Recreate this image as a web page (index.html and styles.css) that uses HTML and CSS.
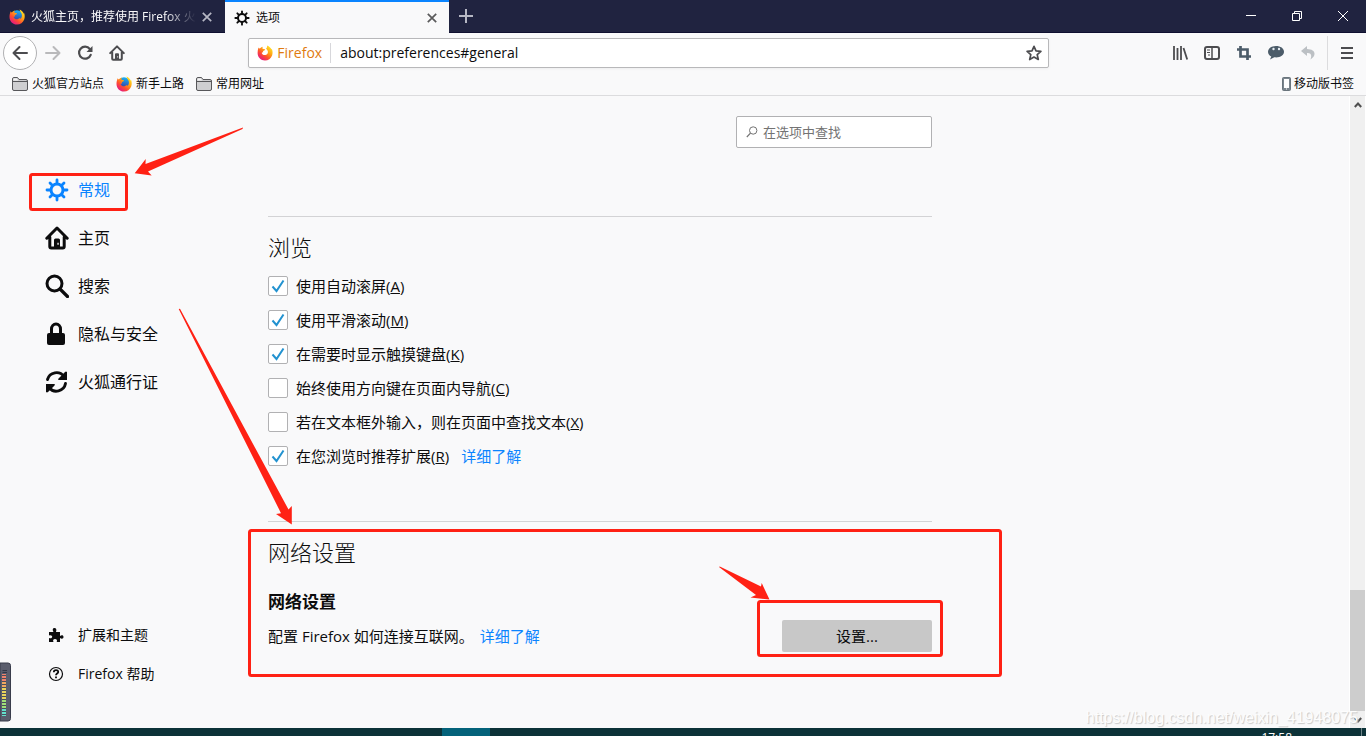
FILE: index.html
```html
<!DOCTYPE html>
<html lang="zh-CN">
<head>
<meta charset="utf-8">
<title>选项</title>
<link rel="stylesheet" href="styles.css">
</head>
<body>
<svg class="defs" aria-hidden="true">
  <defs>
    <linearGradient id="flame" x1="0.85" y1="0.1" x2="0.2" y2="0.95">
      <stop offset="0" stop-color="#ffe226"/><stop offset="0.35" stop-color="#ffa413"/><stop offset="0.65" stop-color="#ff4f2e"/><stop offset="1" stop-color="#e31587"/>
    </linearGradient>
    <linearGradient id="globe" x1="0.6" y1="0" x2="0.4" y2="1">
      <stop offset="0" stop-color="#19b5f5"/><stop offset="1" stop-color="#3c2a96"/>
    </linearGradient>
    <symbol id="firefox" viewBox="0 0 16 16">
      <circle cx="8" cy="7.2" r="6" fill="url(#globe)"/>
      <path fill="url(#flame)" d="M1.6 2.2c.3.7.8 1.1 1.300 1.300C3.700 2.400 4.900 1.700 6 1.500 5.400 2.200 5.200 3 5.300 3.600c.7.6 1.600.4 2.700.8-.1.900-1.300 1-1.900 1.700-.4.6 0 1.400 0 1.400-.7-.2-1.300.1-1.500.5.8 2 2.400 2.500 3.800 2.200 1.200-.3 2.100-1.100 2.800-.9.5.1.3.6-.1 1 1.800-1.200 2.300-3.500 1.500-5.500C12.200 3.400 10.900 2.600 10.600.4c1.800.9 3.700 2.500 4.100 4.300.2-.3.3-.8.2-1.300 1 2.200 1.100 4.800.3 7-1.100 3.100-3.900 5.200-7.200 5.200C3.800 15.600.5 12.300.5 8c0-2.200.5-3.900 1.100-5.800z"/>
    </symbol>
    <symbol id="firefox-flat" viewBox="0 0 16 16">
      <path fill="url(#flame)" d="M1.500 2.500c.3.700.8 1 1.300 1.100C3.700 2.500 4.800 1.900 6 1.700c-.6.7-.7 1.300-.6 1.900.7.600 1.600.4 2.700.8-.1.900-1.300 1-1.900 1.700-.4.600.1 1.300.1 1.300-.8-.1-1.400.1-1.600.5.8 2 2.500 2.400 3.700 2.100 2.700-.7 3-3.100 2-4.800-.4-.7-1-1.200-1.600-1.500 1.500-.6 1-2.300 1.600-3.300 1.500.8 3.500 2.300 4.100 4.100.2-.3.300-.7.200-1.100 1 2.200 1.200 4.800.4 7-1.100 3.100-3.900 5.100-7.100 5.100-4.200 0-7.400-3.400-7.400-7.500 0-2 .3-3.700.9-5.500z"/>
    </symbol>
    <symbol id="gear" viewBox="0 0 24 24">
      <g fill="none" stroke="currentColor" stroke-linecap="round">
        <circle cx="12" cy="12" r="6" stroke-width="3"/>
        <path stroke-width="2.800" d="M12 5V2M12 22v-3M5 12H2M22 12h-3M7 7 5 5M19 19l-2-2M7 17l-2 2M19 5l-2 2"/>
      </g>
    </symbol>
    <symbol id="home" viewBox="0 0 24 24">
      <path fill="none" stroke="currentColor" stroke-width="3" stroke-linecap="round" stroke-linejoin="round" d="M1.800 12.200 12 2l10.200 10.200M4.800 11v9.500q0 1.500 1.500 1.500h11.400q1.500 0 1.500-1.500V11"/>
      <path fill="currentColor" fill-rule="evenodd" d="M9 22v-8q0-1.500 1.500-1.500h3q1.500 0 1.500 1.500v8zm3.400-5.200v1.900h1.300v-1.900z"/>
    </symbol>
    <symbol id="folder" viewBox="0 0 16 14">
      <path d="M.5 12V2Q.5.500 2 .5h3.500L7 2.500h7Q15.500 2.500 15.500 4v8q0 1.500-1.500 1.500H2Q.5 13.500.5 12z" fill="#cfcfd1" stroke="#57575a"/>
      <path d="M.5 4.500h15" stroke="#57575a"/><path d="M1.500 3.500v-2H5l1 2z" fill="#f5f5f5"/>
    </symbol>
    <symbol id="cross" viewBox="0 0 10 10"><path d="m.8.8 8.400 8.400m0-8.400L.8 9.200" fill="none" stroke="currentColor" stroke-width="1.700"/></symbol>
    <symbol id="check" viewBox="0 0 18 18"><path d="m3.500 9.500 4 4.500L14.500 3.500" fill="none" stroke="#2292d0" stroke-width="2"/></symbol>
  </defs>
</svg>

<header>
  <div class="tabs">
    <div class="tab">
      <svg class="i16"><use href="#firefox"/></svg>
      <span class="tab-title fade">火狐主页，推荐使用 Firefox 火</span>
      <button class="tab-close" aria-label="关闭标签页"><svg class="i10"><use href="#cross"/></svg></button>
    </div>
    <div class="tab active">
      <svg class="i16"><use href="#gear"/></svg>
      <span class="tab-title">选项</span>
      <button class="tab-close" aria-label="关闭标签页"><svg class="i10"><use href="#cross"/></svg></button>
    </div>
    <button class="tab-new" aria-label="新标签页"><svg class="i14" viewBox="0 0 14 14"><path d="M7 0v14M0 7h14" stroke="currentColor" stroke-width="2"/></svg></button>
    <div class="window-buttons">
      <button aria-label="最小化"><svg class="i10" viewBox="0 0 10 10"><path d="M0 4.500h10" stroke="#fff"/></svg></button>
      <button aria-label="还原"><svg class="i10" viewBox="0 0 10 10"><path d="M.5 2.500h7v7h-7zM2.500 2V.5h7v7H8" fill="none" stroke="#fff"/></svg></button>
      <button aria-label="关闭"><svg class="i10" viewBox="0 0 10 10"><path d="m0 0 10 10M10 0 0 10" stroke="#fff"/></svg></button>
    </div>
  </div>

  <div class="toolbar">
    <button class="tool back" aria-label="后退"><svg class="i16" viewBox="0 0 16 16"><path d="M15 8H1.500M7.500 2l-6 6 6 6" fill="none" stroke="currentColor" stroke-width="2" stroke-linecap="round" stroke-linejoin="round"/></svg></button>
    <button class="tool forward" aria-label="前进"><svg class="i16" viewBox="0 0 16 16"><path d="M1 8h13.500M8.500 2l6 6-6 6" fill="none" stroke="currentColor" stroke-width="2" stroke-linecap="round" stroke-linejoin="round"/></svg></button>
    <button class="tool" aria-label="刷新"><svg class="i16" viewBox="0 0 16 16"><path d="M12.800 4A6 6 0 1 0 13.700 9.800" fill="none" stroke="currentColor" stroke-width="2.200" stroke-linecap="round"/><path d="M15.500 1v6h-6z" fill="currentColor"/></svg></button>
    <button class="tool" aria-label="主页"><svg class="i16"><use href="#home"/></svg></button>
    <div class="spring"></div>
    <div class="urlbar">
      <svg class="i16"><use href="#firefox-flat"/></svg>
      <span class="identity">Firefox</span>
      <input class="url" type="text" aria-label="地址" value="about:preferences#general">
      <button class="star" aria-label="添加书签"><svg class="i16" viewBox="0 0 16 16"><path d="m8 1.300 2 4.500 4.900.5-3.700 3.300 1.100 4.900L8 12l-4.300 2.500 1.100-4.900L1.100 6.300 6 5.800z" fill="none" stroke="currentColor" stroke-width="1.700" stroke-linejoin="round"/></svg></button>
    </div>
    <div class="spring"></div>
    <button class="tool" aria-label="我的足迹"><svg class="i16" viewBox="0 0 16 16"><path d="M2 1v14M5.500 3v12M9 1v14M11.500 3l3.700 11.500" stroke="currentColor" stroke-width="1.800"/></svg></button>
    <button class="tool" aria-label="侧栏"><svg class="i16" viewBox="0 0 16 16"><rect x="1" y="2" width="14" height="12" rx="2" fill="none" stroke="currentColor" stroke-width="2"/><path d="M8 2v12" stroke="currentColor" stroke-width="1.500"/><path d="M3 5h3M3 7.500h3M4 10h2" stroke="currentColor"/></svg></button>
    <button class="tool slate" aria-label="截图"><svg class="i16" viewBox="0 0 16 16"><path d="M4.500 1v10.500H15M1 4.500h10.500V15" fill="none" stroke="currentColor" stroke-width="2.700"/></svg></button>
    <button class="tool slate" aria-label="聊天"><svg class="i18" viewBox="0 0 18 18"><path d="M9 2C4.500 2 1 4.400 1 7.700c0 2.100 1.300 3.800 3.300 4.800L3 15.500l4.300-2.200c5.500.7 9.700-1.900 9.700-5.600C17 4.400 13.500 2 9 2z" fill="currentColor"/><circle cx="6.500" cy="5" r="1.200" fill="#e6edf2"/><circle cx="12" cy="5" r="1.200" fill="#e6edf2"/></svg></button>
    <button class="tool pale" aria-label="撤销"><svg class="i16" viewBox="0 0 16 16"><path d="M7 1 1 6l6 5V8c3.500-.3 5.300 1.200 3.500 6.500C17 10 15.500 4.200 7 4z" fill="currentColor"/></svg></button>
    <button class="tool menu" aria-label="打开菜单"><svg class="i14" viewBox="0 0 14 14"><path d="M1 2h12M1 7h12M1 12h12" stroke="currentColor" stroke-width="2"/></svg></button>
  </div>

  <nav class="bookmarks" aria-label="书签工具栏">
    <a href="#official"><svg class="i16"><use href="#folder"/></svg>火狐官方站点</a>
    <a href="#start"><svg class="i16"><use href="#firefox"/></svg>新手上路</a>
    <a href="#common"><svg class="i16"><use href="#folder"/></svg>常用网址</a>
    <a class="mobile" href="#mobile"><svg class="phone" viewBox="0 0 9 14"><rect x=".5" y=".5" width="8" height="13" rx="1" fill="#7b858d" stroke="#69747c"/><path d="M2 2h5v9H2z" fill="#fff"/><path d="M4 12h1" stroke="#fff"/></svg>移动版书签</a>
  </nav>
</header>

<div class="page">
  <aside class="sidebar">
    <nav aria-label="分类">
      <a class="category selected" href="#general"><svg class="i24"><use href="#gear"/></svg>常规</a>
      <a class="category" href="#home-page"><svg class="i24"><use href="#home"/></svg>主页</a>
      <a class="category" href="#search"><svg class="i24" viewBox="0 0 24 24"><circle cx="9.500" cy="9.500" r="7.500" fill="none" stroke="currentColor" stroke-width="3"/><path d="m15 15 7.500 7.500" stroke="currentColor" stroke-width="3.200" stroke-linecap="round"/></svg>搜索</a>
      <a class="category" href="#privacy"><svg class="i24" viewBox="0 0 24 24"><path d="M6.500 12V7a4.500 5 0 0 1 9 0v5" fill="none" stroke="currentColor" stroke-width="3"/><rect x="2" y="11" width="18" height="12" rx="2" fill="currentColor"/></svg>隐私与安全</a>
      <a class="category" href="#sync"><svg class="i24" viewBox="0 0 24 24"><path d="M2.500 9.500a9.300 9.300 0 0 1 16.500-3M20.500 13.500a9.300 9.300 0 0 1-16.500 4" fill="none" stroke="currentColor" stroke-width="2.900" stroke-linecap="round"/><path d="M22 2v8h-8.500q-.8-.8 0-1.600L20 2q1-.8 2 0zM1 22v-8h8.500q.8.800 0 1.600L3 22q-1 .8-2 0z" fill="currentColor"/></svg>火狐通行证</a>
    </nav>
    <nav class="support" aria-label="帮助">
      <a class="support-link" href="#addons"><svg class="i16" viewBox="0 0 16 16"><path d="M1 5h4.500C4 2.500 5 1 6.500 1S9 2.500 8 5h4v4c2-1.300 3.500-.5 3.500 1s-1.500 2.300-3.500 1v4H8.700c.9-2-.2-3-1.700-3s-2.500 1-1.500 3H1v-4c2 .9 3.200 0 3.200-1.200S3 7.700 1 8.500z" fill="currentColor"/></svg>扩展和主题</a>
      <a class="support-link" href="#help"><svg class="i16" viewBox="0 0 16 16"><circle cx="8" cy="8" r="6.500" fill="none" stroke="currentColor" stroke-width="1.200"/><path d="M5.800 6.300C5.800 3.300 10.300 3.500 10.200 6c0 1.500-2.200 1.600-2.200 3.200M8 10.500v1.700" fill="none" stroke="currentColor" stroke-width="1.800"/></svg>Firefox 帮助</a>
    </nav>
  </aside>

  <main class="content">
    <label class="search">
      <svg class="search-icon" viewBox="0 0 12 12"><circle cx="7.200" cy="4.500" r="3.700" fill="none" stroke="currentColor"/><path d="M4.500 7.200.8 11" stroke="currentColor" stroke-width="1.200"/></svg>
      <input type="search" placeholder="在选项中查找" aria-label="在选项中查找">
    </label>

    <section class="group">
      <h1>浏览</h1>
      <div class="option"><label><span class="box"><input type="checkbox" checked><svg><use href="#check"/></svg></span><span>使用自动滚屏(<u>A</u>)</span></label></div>
      <div class="option"><label><span class="box"><input type="checkbox" checked><svg><use href="#check"/></svg></span><span>使用平滑滚动(<u>M</u>)</span></label></div>
      <div class="option"><label><span class="box"><input type="checkbox" checked><svg><use href="#check"/></svg></span><span>在需要时显示触摸键盘(<u>K</u>)</span></label></div>
      <div class="option"><label><span class="box"><input type="checkbox"><svg><use href="#check"/></svg></span><span>始终使用方向键在页面内导航(<u>C</u>)</span></label></div>
      <div class="option"><label><span class="box"><input type="checkbox"><svg><use href="#check"/></svg></span><span>若在文本框外输入，则在页面中查找文本(<u>X</u>)</span></label></div>
      <div class="option"><label><span class="box"><input type="checkbox" checked><svg><use href="#check"/></svg></span><span>在您浏览时推荐扩展(<u>R</u>)</span></label><a class="more" href="#more-extensions">详细了解</a></div>
    </section>

    <section class="group">
      <h1>网络设置</h1>
      <h2>网络设置</h2>
      <div class="network">
        <span>配置 Firefox 如何连接互联网。</span><a class="more" href="#more-network">详细了解</a>
        <button class="settings">设置...</button>
      </div>
    </section>
  </main>

  <div class="scrollbar" aria-hidden="true">
    <svg class="arrow" viewBox="0 0 8 6"><path d="m.8 5 3.200-3.500L7.200 5" fill="none" stroke="#505050" stroke-width="2"/></svg>
    <div class="track"><div class="thumb"></div></div>
    <svg class="arrow" viewBox="0 0 8 6"><path d="M.8 1 4 4.500 7.200 1" fill="none" stroke="#505050" stroke-width="2"/></svg>
  </div>

  <svg class="marks" viewBox="0 0 1366 632" aria-hidden="true">
    <g fill="none" stroke="#ff2114" stroke-width="3">
      <rect x="30.500" y="78.500" width="96" height="35" rx="2"/>
      <rect x="249.500" y="434.500" width="751" height="145" rx="2"/>
      <rect x="758.500" y="505.500" width="183" height="54" rx="2"/>
    </g>
    <g fill="#ff2114">
      <path d="M243 31.500 242.500 33 148 75.500l3.700 4-17-2.200L145.700 63l-.2 5z"/>
      <path d="m178.700 213 1.300-.2L288.500 413.500l3.300-3.500v18.500L276 418l5-.8z"/>
      <path d="m719 471 .8-.6L761 490.500l.7-3.500 7.800 16.500-19-2 5.500-2.500z"/>
    </g>
  </svg>
  <svg class="meter" viewBox="0 0 11 60" aria-hidden="true">
    <path d="M0 1h8q2.500 0 2.500 2.500v53Q10.500 59 8 59H0z" fill="#5a5d6c" stroke="#393c4b"/>
    <path d="M2.500 8.500h4.500M2.500 10.500h4.500" stroke="#343747"/>
    <path d="M2 12v7h4v-7z" fill="#f0826c"/><path d="M2 19v7h4v-7z" fill="#f0a860"/><path d="M2 26v12h4V26z" fill="#ead45c"/><path d="M2 38v8h4v-8z" fill="#a0e078"/><path d="M2 46v8h4v-8z" fill="#63e0cc"/>
    <path d="M4 13v41" stroke="#4b4e5c" stroke-width="4" stroke-dasharray="1 2"/>
  </svg>
  <div class="watermark">https://blog.csdn.net/weixin_41948075</div>
</div>
<footer class="taskbar"><span class="task"></span><time>17:58</time><span class="desktop"></span></footer>
</body>
</html>
```
FILE: styles.css
```css
* { box-sizing: border-box; }
body {
  margin: 0;
  height: 100vh;
  display: flex;
  flex-direction: column;
  overflow: hidden;
  background: #f9f9fa;
  color: #0c0c0d;
  font: 15px/20px "Open Sans", "Noto Sans CJK SC", sans-serif;
}
a { color: inherit; text-decoration: none; }
button { padding: 0; border: 0; background: none; color: inherit; font: inherit; }
svg { display: block; flex: none; }
.defs { position: absolute; width: 0; height: 0; }
.i10 { width: 10px; height: 10px; }
.i14 { width: 14px; height: 14px; }
.i16 { width: 16px; height: 16px; }
.i18 { width: 18px; height: 18px; }
.i24 { width: 24px; height: 24px; }

.tabs { display: flex; height: 33px; background: #202340; border-bottom: 1px solid #0f1030; font-size: 12px; }
.tab { display: flex; align-items: center; gap: 6px; width: 225px; height: 33px; padding: 0 13px 0 9px; color: #f9f9fa; }
.tab.active { width: 224px; padding-right: 12px; background: #f9f9fa; color: #0c0c0d; border-top: 2px solid #0a84ff; }
.tab-title { flex: 1; min-width: 0; white-space: nowrap; }
.fade { mask-image: linear-gradient(to left, transparent, #000 30px); }
.tab-close { color: #b6b7c4; }
.active .tab-close { color: #5a5a5b; }
.tab-new { width: 34px; display: grid; place-items: center; color: #b6b7c4; }
.window-buttons { display: flex; margin-left: auto; }
.window-buttons button { width: 46px; display: grid; place-items: center; }

.toolbar { display: flex; align-items: center; height: 40px; padding: 0 4px 0 3px; color: #4c4c4f; }
.tool { width: 32px; height: 32px; display: grid; place-items: center; }
.back { width: 34px; height: 34px; border: 1px solid #b1b1b3; border-radius: 50%; background: #fff; }
.forward { color: #b9b9bb; }
.slate { color: #4c5c69; }
.pale { color: #bcc0c4; }
.menu { width: 35px; height: 34px; margin-left: 3px; padding-left: 4px; border-left: 1px solid #dcdcde; }
.spring { flex: 5; }
.urlbar { display: flex; align-items: center; flex: 34; height: 30px; padding: 0 6px 0 8px; background: #fff; border: 1px solid #b8b8ba; border-radius: 2px; box-shadow: 0 1px 3px #0000000d; font-size: 14px; }
.identity { padding: 0 8px 0 4px; border-right: 1px solid #d7d7db; color: #e07b10; }
.url { flex: 1; min-width: 0; padding: 0 9px; border: 0; outline: 0; background: none; color: #0c0c0d; font: inherit; }

.bookmarks { display: flex; align-items: center; gap: 12px; height: 23px; padding: 0 12px; border-bottom: 1px solid #dcdcde; font-size: 12px; }
.bookmarks a { display: flex; align-items: center; gap: 4px; }
.bookmarks .mobile { gap: 3px; margin-left: auto; }
.phone { width: 9px; height: 14px; }

.page { position: relative; flex: 1; min-height: 0; display: flex; }
.sidebar { display: flex; flex-direction: column; width: 268px; padding: 70px 0 35px 45px; }
.category { display: flex; align-items: center; gap: 9px; height: 48px; font-size: 16px; }
.selected { color: #0a84ff; }
.support { margin-top: auto; }
.support-link { display: flex; align-items: center; gap: 14px; height: 39px; padding-left: 3px; font-size: 14px; }

.content { width: 664px; padding-top: 20px; }
.search { display: flex; align-items: center; gap: 5px; width: 196px; height: 32px; margin: 0 0 68px auto; padding: 0 9px; border: 1px solid #b1b1b3; border-radius: 2px; background: #fff; color: #737373; }
.search-icon { width: 12px; height: 12px; }
.search input { flex: 1; min-width: 0; padding: 0; border: 0; outline: 0; background: none; font: inherit; font-size: 13px; }
.search input::placeholder { color: #737373; }
.group { padding: 14px 0 48px; border-top: 1px solid #d3d3d5; }
h1 { margin: 0 0 6px; font-size: 22px; font-weight: 300; line-height: 32px; }
h2 { margin: 22px 0 6px; font-size: 17px; font-weight: 700; line-height: 24px; }
.option { display: flex; align-items: center; height: 34px; }
.option label { display: flex; align-items: center; gap: 8px; }
.box { display: grid; width: 20px; height: 20px; }
.box > * { grid-area: 1 / 1; }
.box input { appearance: none; width: 20px; height: 20px; margin: 0; border: 1px solid #b1b1b3; border-radius: 2px; background: #fff; }
.box svg { width: 18px; height: 18px; place-self: center; visibility: hidden; pointer-events: none; }
.box input:checked + svg { visibility: visible; }
.more { margin-left: 12px; color: #0a84ff; }
.network { display: flex; align-items: center; }
.network .more { margin-left: 6px; }
.settings { width: 150px; height: 32px; margin-left: auto; border-radius: 2px; background: #c8c8c8; }

.scrollbar { display: flex; flex-direction: column; align-items: center; width: 17px; margin-left: auto; padding: 6px 0 5px; background: #f0f0f0; border: solid #fff; border-width: 0 1px; }
.arrow { width: 8px; height: 6px; }
.track { flex: 1; width: 100%; display: flex; flex-direction: column; justify-content: flex-end; padding-bottom: 6px; }
.thumb { height: 20%; background: #cdcdcd; }

.marks { position: absolute; left: 0; top: 0; width: 1366px; height: 632px; pointer-events: none; }
.meter { position: absolute; left: 0; bottom: 6px; width: 11px; height: 60px; }
.watermark { position: absolute; right: 8px; bottom: 0; color: #fdfdfd; text-shadow: 1px 1px 1px #c8c8c8; font: 16px/20px "Liberation Sans", sans-serif; }

.taskbar { display: flex; justify-content: flex-end; height: 8px; overflow: hidden; background: #0c3238; color: #fff; font-size: 12px; line-height: 20px; }
.task { width: 48px; margin: 0 auto 0 442px; background: #04627a; }
.taskbar time { margin-right: 69px; }
.desktop { width: 5px; border-left: 1px solid #708589; }
```
